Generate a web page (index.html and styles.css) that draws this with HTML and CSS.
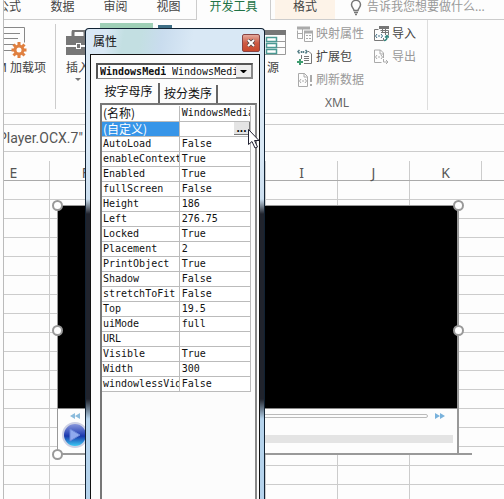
FILE: index.html
```html
<!DOCTYPE html>
<html lang="zh-CN">
<head>
<meta charset="utf-8">
<title>属性</title>
<link rel="stylesheet" href="styles.css">
</head>
<body>
<main class="app">
  <nav class="tabs">
    <a class="tab tab-formula" href="#">公式</a>
    <a class="tab" href="#">数据</a>
    <a class="tab" href="#">审阅</a>
    <a class="tab" href="#">视图</a>
    <a class="tab tab-active" href="#">开发工具</a>
    <a class="tab tab-format" href="#">格式</a>
    <a class="tell" href="#">
      <svg width="12" height="16" viewBox="0 0 12 16" fill="none" stroke="#777" stroke-width="1.5"><path d="M4 10.500C4 8.500 1.500 7.500 1.500 4.800a4.500 4.500 0 0 1 9 0C10.500 7.500 8 8.500 8 10.500zM4 12.500h4M5 14.500h2"/></svg>
      告诉我您想要做什么...
    </a>
  </nav>

  <section class="ribbon">
    <div class="group group-addin">
      <button class="big">
        <svg width="28" height="32" viewBox="0 0 28 32"><path d="M0 1.500h20.500v15M0 7.500h16M0 12.500h14M0 18.500h10M0 24.500h8" fill="none" stroke="#888"/><circle cx="15" cy="24" r="4" fill="none" stroke="#e08040" stroke-width="3"/><path d="M15 16v3M15 29v3M7.500 24h3M19.500 24h3M9.500 18.500l2 2M18.500 27.500l2 2M9.500 29.500l2-2M18.500 20.500l2-2" stroke="#e08040" stroke-width="3"/></svg>
        <span class="nowrap">M 加载项</span>
      </button>
    </div>
    <div class="group group-insert">
      <button class="big">
        <svg width="28" height="28" viewBox="0 2 28 28"><path d="M9 9V4.500q0-2 2-2h8q2 0 2 2V9" fill="none" stroke="#777" stroke-width="3"/><path d="M2 8h25v9H17v-2h-5v2H2zM2 19h10v2h5v-2h10v8H2z" fill="#777"/><path d="M13 16h3v4h-3z" fill="#777"/></svg>
        <span class="nowrap">插入</span>
        <i class="caret"></i>
      </button>
    </div>
    <div class="group group-design"><span class="design-on"></span><span class="code-icon"></span></div>
    <div class="group group-source">
      <button class="big">
        <svg width="28" height="30" viewBox="0 0 28 30"><path d="M0 3h27v5H0z" fill="#777"/><path d="M26.500 8v19.500H0M18 14.500h8M18 20.500h8" fill="none" stroke="#999"/><path d="M7.500 10.500h10v4h-10zM7.500 16.500h10v4h-10zM7.500 22.500h10v4h-10z" fill="#fff" stroke="#4b9a94" stroke-width="1.500"/></svg>
        <span class="nowrap">源</span>
      </button>
    </div>
    <div class="group group-xml">
      <div class="xml-grid">
        <button class="small dim"><svg width="16" height="16" viewBox="0 0 16 16" fill="none" stroke="#aaa"><path d="M.5 4.500v8h5M.5 7.500h5M5.500 3v10M7.500 5.500h8v10h-8zM9 9.500h2M12 9.500h2M9 12.500h2M12 12.500h2"/><path d="M0 2h13M7 6h9" stroke-width="3"/></svg>映射属性</button>
        <button class="small"><svg width="16" height="16" viewBox="0 0 16 16" fill="none" stroke="#777"><path d="M5.500 3.500h-4v11h9V12M7.500 4.500h8v5M9.500 3v4M12.500 3v6M8 6.500h7"/><path d="M6 1.500h10" stroke-width="3"/><path d="M4 8L2.500 10 4 12M8 8l1.500 2L8 12M6 9v2" stroke="#3f6f86"/><path d="M11 14.500c3 0 3-2 3-4M12 11.500l2-2 2 2" stroke="#35877f" stroke-width="1.500"/></svg>导入</button>
        <button class="small"><svg width="16" height="16" viewBox="0 0 16 16" fill="none" stroke="#777"><path d="M11 2.500h1l2.500 2.500v9.500H7M4.500 6v4M7 7.500h5M7 9.500h5M7 11.500h5"/><path d="M2.500 1L1 2.500l1.500 2M8.500 1L10 2.500l-1.500 2M4.500 2v2M6.500 2v2" stroke="#547d86" stroke-width="1.500"/><path d="M3 10v6M0 13h6" stroke="#3f9d70" stroke-width="2"/></svg>扩展包</button>
        <button class="small dim"><svg width="16" height="16" viewBox="0 0 16 16" fill="none" stroke="#aaa"><path d="M10.500 9V4l-3-3H1.500v12.500h7M7 1v4h3M4 6L2.500 8 4 10M8 6l1.500 2L8 10M6 7v2M10.500 10v3h4M13 11l2 2-2 2"/></svg>导出</button>
        <button class="small dim wide"><svg width="16" height="16" viewBox="0 0 16 16" fill="none" stroke="#aaa"><path d="M10.500 14.500h-9v-13h6l3 3zM7 1v4h3M4 7L2.500 9 4 11M8 7l1.500 2L8 11M6 8v2"/><path d="M14 3v7M14 12v2" stroke-width="2"/></svg>刷新数据</button>
      </div>
      <div class="group-name">XML</div>
    </div>
  </section>

  <section class="formula">Player.OCX.7"</section>

  <section class="sheet">
    <div class="columns"><span>E</span><span>F</span><span></span><span></span><span>I</span><span>J</span><span>K</span><span></span></div>
    <div class="cells"></div>
  </section>

  <section class="player">
    <div class="screen"></div>
    <div class="controls">
      <div class="seek">
        <svg width="10" height="6" viewBox="0 0 10 6"><path d="M5 0v6L0 3zM10 0v6L5 3z" fill="#8bbbdc"/></svg>
        <span class="track"></span>
        <svg width="10" height="6" viewBox="0 0 10 6"><path d="M0 0v6l5-3zM5 0v6l5-3z" fill="#79b2dc"/></svg>
      </div>
      <div class="playrow">
        <button class="play" aria-label="播放"><svg width="12" height="14" viewBox="0 0 12 14"><path d="M1 1l10 6-10 6z" fill="#8fa9ee" stroke="#6c87d8"/></svg></button>
        <span class="status"></span>
      </div>
    </div>
    <i class="edge"></i>
    <i class="handle tl"></i><i class="handle tr"></i><i class="handle ml"></i><i class="handle mr"></i><i class="handle bl"></i>
  </section>

  <section class="dialog">
    <header class="titlebar">
      <span>属性</span>
      <button class="close" aria-label="关闭"><svg width="8" height="8" viewBox="0 0 8 8"><path d="M1 1l6 6M7 1L1 7" stroke="#544" stroke-width="3.500"/><path d="M1 1l6 6M7 1L1 7" stroke="#fff" stroke-width="2"/></svg></button>
    </header>
    <div class="client">
      <button class="combo" aria-label="对象"><b>WindowsMediaPlayer1</b><span>WindowsMediaPlayer</span><i class="drop"></i></button>
      <div class="sorts"><button class="sort sort-on">按字母序</button><button class="sort">按分类序</button></div>
      <div class="list">
        <table class="props">
          <tr><th class="cjk">(名称)</th><td>WindowsMediaPlayer1</td></tr>
          <tr class="selected"><th class="cjk">(自定义)</th><td><button class="more" aria-label="自定义">...</button></td></tr>
          <tr><th>AutoLoad</th><td>False</td></tr>
          <tr><th>enableContextMenu</th><td>True</td></tr>
          <tr><th>Enabled</th><td>True</td></tr>
          <tr><th>fullScreen</th><td>False</td></tr>
          <tr><th>Height</th><td>186</td></tr>
          <tr><th>Left</th><td>276.75</td></tr>
          <tr><th>Locked</th><td>True</td></tr>
          <tr><th>Placement</th><td>2</td></tr>
          <tr><th>PrintObject</th><td>True</td></tr>
          <tr><th>Shadow</th><td>False</td></tr>
          <tr><th>stretchToFit</th><td>False</td></tr>
          <tr><th>Top</th><td>19.5</td></tr>
          <tr><th>uiMode</th><td>full</td></tr>
          <tr><th>URL</th><td></td></tr>
          <tr><th>Visible</th><td>True</td></tr>
          <tr><th>Width</th><td>300</td></tr>
          <tr><th>windowlessVideo</th><td>False</td></tr>
        </table>
      </div>
    </div>
  </section>
  <svg class="cursor" width="12" height="20" viewBox="0 0 12 20"><path d="M.5.500v15l3.500-3 3 6.500 2.500-1-3-6.500H11z" fill="#fff" stroke="#223"/></svg>
</main>
</body>
</html>
```
FILE: styles.css
```css
* { box-sizing: border-box; }
body {
  margin: 0;
  background: #fdfdfd;
  color: #444;
  font: 12px/16px "Noto Sans", "Noto Sans CJK SC", sans-serif;
}
a { color: inherit; text-decoration: none; }
button {
  margin: 0;
  padding: 0;
  border: 0;
  background: none;
  color: inherit;
  font: inherit;
}
svg { display: block; flex: none; }
.nowrap { white-space: nowrap; }

.app {
  position: relative;
  display: flex;
  flex-direction: column;
  height: 100vh;
  margin-left: 3px;
  border-left: 1px solid #bbb;
  overflow: hidden;
}

/* Ribbon tabs */
.tabs {
  display: flex;
  flex: none;
  height: 20px;
  border-bottom: 1px solid #ccc;
  white-space: nowrap;
}
.tab { width: 53px; height: 20px; line-height: 14px; text-align: center; }
.tab-formula { display: flex; width: 32px; justify-content: flex-end; padding-right: 15px; }
.tab-active {
  width: 75px;
  margin-left: 1px;
  background: #fdfdfd;
  border: solid #ccc;
  border-width: 0 1px;
  color: #217346;
}
.tab-format { width: 60px; margin-left: 4px; height: 19px; background: #fdf3e8; }
.tell { display: flex; gap: 5px; margin-left: 15px; color: #999; line-height: 14px; }

/* Ribbon */
.ribbon {
  display: flex;
  flex: none;
  height: 94px;
  border-bottom: 1px solid #ccc;
}
.group { flex: none; padding-top: 5px; }
.big {
  display: flex;
  flex-direction: column;
  align-items: center;
  gap: 2px;
  width: 100%;
  line-height: 16px;
}
.group-addin { width: 52px; height: 85px; margin-top: 4px; padding-top: 2px; border-right: 1px solid #ccc; }
.group-addin .big { align-items: flex-start; }
.group-addin .nowrap { margin-left: -8px; }
.group-insert { width: 44px; padding-top: 10px; }
.caret { border: 3px solid transparent; border-top-color: #777; }
.group-design { display: flex; gap: 5px; width: 156px; padding-top: 3px; }
.design-on { width: 53px; height: 40px; background: #9fcfb6; }
.code-icon { width: 14px; height: 14px; margin-top: 2px; background: #3f6f86; }
.group-source { width: 34px; padding-top: 7px; }
.group-source .big { gap: 3px; }
.group-xml { width: 138px; height: 90px; border-right: 1px solid #ddd; padding: 4px 0 0 7px; }
.xml-grid { display: grid; grid-template-columns: 76px 50px; grid-auto-rows: 23px; }
.small { display: flex; gap: 3px; align-items: center; white-space: nowrap; height: 20px; }
.wide { grid-column: 1 / 3; }
.dim { color: #999; }
.group-name { padding: 2px 50px 0 0; text-align: center; color: #666; }

/* Formula bar, scrolled slightly past the start of its text */
.formula {
  flex: none;
  height: 28px;
  margin-top: 10px;
  border: solid #ccc;
  border-width: 1px 0;
  font: 14px/26px Roboto, sans-serif;
  text-indent: -6px;
  color: #555;
}

/* Worksheet */
.sheet { display: flex; flex: 1; flex-direction: column; }
.columns {
  display: flex;
  height: 29px;
  padding-top: 9px;
  border-bottom: 1px solid #aaa;
}
.columns span {
  flex: none;
  width: 72px;
  border-right: 1px solid #ccc;
  font-size: 14px;
  line-height: 24px;
  text-align: center;
  color: #555;
}
.columns span:first-child { width: 46px; padding-right: 26px; }
.cells {
  flex: 1;
  background:
    repeating-linear-gradient(to bottom, transparent 0 18px, #ccc 18px 19px),
    repeating-linear-gradient(to right, transparent 0 71px, #ccc 71px 72px) -26px 0;
}

/* Media player object */
.player {
  position: absolute;
  top: 205px;
  left: 53px;
  width: 402px;
  border: solid #999;
  border-width: 1px 2px 2px 1px;
  background: #fdfdfd;
}
.screen { height: 202px; background: #000; }
.controls { padding: 4px 4px 0; height: 45px; border-top: 1px solid #888; }
.seek { display: flex; align-items: center; gap: 7px; padding: 0 8px; }
.track { flex: 1; height: 4px; border: 1px solid #bbb; border-radius: 2px; }
.playrow { display: flex; align-items: center; }
.play {
  display: flex;
  align-items: center;
  justify-content: center;
  width: 26px;
  height: 26px;
  margin-top: 3px;
  border: 2px solid #ccd0e4;
  border-radius: 50%;
  background: linear-gradient(#8998dc, #2340b4 50%, #1838ac 55%, #3ccaf4);
}
.status { flex: 1; height: 8px; margin-top: 10px; background: #e4e4e4; }
.edge {
  position: absolute;
  bottom: -2px;
  left: 100%;
  width: 15px;
  height: 2px;
  background: #999;
}
.handle {
  position: absolute;
  width: 11px;
  height: 11px;
  border: 2px solid #999;
  border-radius: 50%;
  background: #fff;
}
.tl, .ml, .bl { left: -6px; }
.tr, .mr { right: -7px; }
.tl, .tr { top: -6px; }
.ml, .mr { top: 119px; }
.bl { bottom: -7px; }

/* Properties window */
.dialog {
  position: absolute;
  top: 28px;
  bottom: 0;
  left: 81px;
  display: flex;
  flex-direction: column;
  width: 180px;
  padding: 0 4px;
  border: 1px solid #123;
  border-bottom: 0;
  border-radius: 4px 4px 0 0;
  background: linear-gradient(#d9e8f5 0 120px, #ccdff0 170px, #20232c 185px 370px, #b5d3ec 390px);
  color: #111;
}
.titlebar {
  display: flex;
  flex: none;
  justify-content: space-between;
  height: 25px;
  padding-left: 3px;
  background: linear-gradient(100deg, transparent 10%, #c3dfe2 20% 30%, #c9dcee 42%, transparent 60%);
  line-height: 26px;
}
.close {
  display: flex;
  align-items: center;
  justify-content: center;
  width: 18px;
  height: 18px;
  margin-top: 5px;
  border: 1px solid #844;
  border-radius: 2px;
  background: linear-gradient(#e5a99c, #cc5a44 50%, #c9482c);
}
.client {
  display: flex;
  flex: 1;
  flex-direction: column;
  min-height: 0;
  padding: 8px 2px 0 5px;
  border: 1px solid #111;
  border-bottom: 0;
  background: #fcfcfc;
}
.combo {
  display: flex;
  align-items: center;
  flex: none;
  height: 16px;
  margin-right: 4px;
  border: 1px solid #888;
  border-top: 2px solid #555;
  border-left: 2px solid #555;
  background: #fff;
  font: 10px/13px "DejaVu Sans Mono", monospace;
}
.combo b, .combo span { overflow: hidden; white-space: nowrap; text-align: left; }
.combo b { width: 66px; margin: 0 6px 0 2px; }
.combo span { flex: 1; }
.drop { width: 16px; height: 13px; border: solid #888; border-width: 0 1px 1px 0; background: #eee; }
.drop::before { content: ""; display: block; margin: 5px 4px; border: 3px solid transparent; border-top-color: #000; }
.sorts { display: flex; flex: none; height: 22px; margin-top: 2px; align-items: flex-end; }
.sort { width: 58px; height: 18px; border-right: 2px solid #666; white-space: nowrap; }
.sort-on { width: 64px; height: 20px; padding: 0 0 2px 3px; }
.list {
  flex: 1;
  margin-left: 4px;
  padding: 1px 4px 0 0;
  border: 2px solid #777;
  border-bottom: 0;
  border-right: 2px solid #888;
  overflow: hidden;
}
.props {
  width: 100%;
  border-collapse: collapse;
  table-layout: fixed;
  background: #fff;
  font: 10px/14px "DejaVu Sans Mono", "Noto Sans CJK SC", monospace;
}
.props th, .props td {
  height: 15px;
  padding: 0 0 0 2px;
  border: 1px solid #bbb;
  border-width: 0 1px 1px 0;
  font-weight: normal;
  text-align: left;
  white-space: nowrap;
  overflow: hidden;
}
.props th { width: 52%; padding-left: 1px; }
.props .cjk { font: 12px/14px "Noto Sans CJK SC", sans-serif; }
.selected th { background: #3795e8; color: #fff; }
.more {
  display: block;
  width: 16px;
  height: 13px;
  margin-left: auto;
  background: #e4e4e4;
  border: solid #777;
  border-width: 0 1px 1px 0;
  font: bold 12px/8px "Liberation Sans", sans-serif;
}
.cursor { position: absolute; top: 129px; left: 244px; }
```
